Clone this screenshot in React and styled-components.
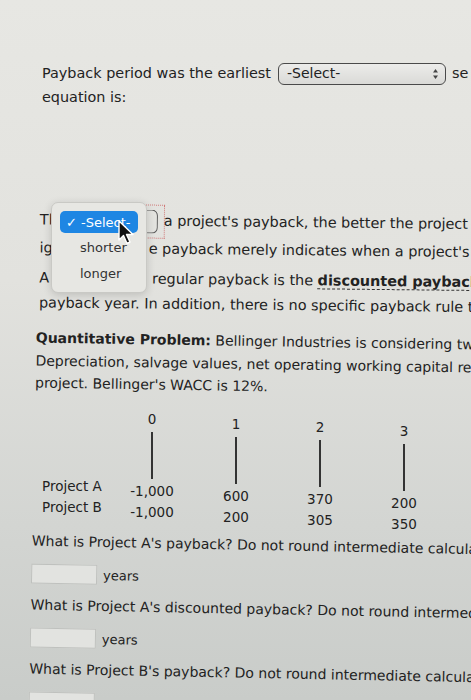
import React from "react";
import styled, { createGlobalStyle } from "styled-components";

const Global = createGlobalStyle`
  html, body {
    margin: 0;
    padding: 0;
    overflow: hidden;
  }
  body {
    width: 471px;
    height: 700px;
    background: linear-gradient(180deg, #e7e7e3 0%, #e2e2de 40%, #d3d5d2 75%, #c9ccc9 100%);
    font-family: "DejaVu Sans", Verdana, sans-serif;
    color: #222;
  }
`;

const Page = styled.div`
  width: 471px;
  height: 700px;
  overflow: hidden;
  position: relative;
  padding-top: 63px;
  box-sizing: border-box;
`;

const Section = styled.div`
  padding-left: ${(p) => p.$left || 36}px;
  margin-top: ${(p) => p.$top || 0}px;
  font-size: ${(p) => p.$size || 14}px;
  transform: rotate(${(p) => p.$tilt || 0}deg);
  transform-origin: left top;
`;

const Line = styled.div`
  white-space: nowrap;
  line-height: ${(p) => p.$lh || 21}px;
  height: ${(p) => p.$lh || 21}px;
  margin-top: ${(p) => p.$mt || 0}px;
  display: flex;
  align-items: center;
`;

const Bold = styled.b`
  font-weight: bold;
`;

const Dashed = styled.b`
  font-weight: bold;
  border-bottom: 1.5px dashed #333;
  line-height: 16px;
`;

const Gap = styled.span`
  display: inline-block;
  width: ${(p) => p.$w}px;
  flex-shrink: 0;
`;

const SelectBox = styled.span`
  display: inline-flex;
  align-items: center;
  justify-content: space-between;
  width: ${(p) => p.$w}px;
  height: 22px;
  box-sizing: border-box;
  margin: 0 6px 0 7px;
  padding: 0 6px 0 8px;
  border: 1.5px solid #4a4a4a;
  border-radius: 6px;
  background: linear-gradient(180deg, #ececea, #dadad7);
  font-size: 14px;
  color: #222;
  flex-shrink: 0;
`;

const Arrows = styled.svg`
  width: 7px;
  height: 12px;
`;

const DottedWrap = styled.span`
  display: inline-flex;
  align-items: center;
  justify-content: flex-end;
  width: 22px;
  height: 32px;
  margin-left: 84px;
  margin-right: 0;
  outline: 1.5px dotted #d07a7a;
  flex-shrink: 0;
`;

const Stub = styled.span`
  width: 10px;
  height: 22px;
  border: 1.5px solid #555;
  border-left: none;
  border-radius: 0 6px 6px 0;
  margin-right: 6px;
`;

const Popup = styled.div`
  position: absolute;
  left: 51px;
  top: 202px;
  width: 96px;
  height: 91px;
  box-sizing: border-box;
  padding: 8px 8px;
  background: #e7e7e3;
  border: 1px solid #c9c9c5;
  border-radius: 7px;
  box-shadow: 0 2px 8px rgba(0, 0, 0, 0.16);
  font-size: 13px;
  z-index: 2;
`;

const Option = styled.div`
  height: ${(p) => (p.$active ? 22 : 24)}px;
  display: flex;
  align-items: center;
  padding-left: ${(p) => (p.$active ? 6 : 20)}px;
  border-radius: 5px;
  background: ${(p) => (p.$active ? "#1e86e3" : "transparent")};
  color: ${(p) => (p.$active ? "#fff" : "#333")};
  margin-bottom: 2px;
`;

const Cursor = styled.svg`
  position: absolute;
  left: 117px;
  top: 220px;
  width: 20px;
  height: 26px;
  z-index: 3;
`;

const Timeline = styled.div`
  display: flex;
  padding-left: 42px;
  margin-top: 18px;
  font-size: 13.5px;
`;

const Labels = styled.div`
  width: 68px;
  padding-top: 65px;
  display: flex;
  flex-direction: column;
`;

const Col = styled.div`
  width: 84px;
  display: flex;
  flex-direction: column;
  align-items: center;
  transform: translateY(${(p) => p.$drop}px);
`;

const TickNum = styled.div`
  height: 16px;
  line-height: 16px;
`;

const TickLine = styled.div`
  width: 1.5px;
  height: 47px;
  background: #333;
  margin: 5px 0 2px;
`;

const Cell = styled.div`
  height: 21px;
  line-height: 21px;
  white-space: nowrap;
`;

const AnswerRow = styled.div`
  display: flex;
  align-items: center;
  gap: 6px;
  height: 26px;
  font-size: 13px;
  margin: 9px 0 8px;
`;

const Input = styled.span`
  display: inline-block;
  width: 66px;
  height: 20px;
  box-sizing: border-box;
  border: 1px solid #bfc1be;
  background: #e2e3e0;
`;

const UpDown = () => (
  <Arrows viewBox="0 0 7 12">
    <path d="M3.5 1 L6 4.5 H1 Z" fill="#444" />
    <path d="M3.5 11 L6 7.5 H1 Z" fill="#444" />
  </Arrows>
);

const cols = [
  { n: "0", a: "-1,000", b: "-1,000", drop: 0 },
  { n: "1", a: "600", b: "200", drop: 5 },
  { n: "2", a: "370", b: "305", drop: 8 },
  { n: "3", a: "200", b: "350", drop: 12 },
];

export default function App() {
  return (
    <>
      <Global />
      <Page>
        <Section $left={42} $size={14.4}>
          <Line>
            Payback period was the earliest
            <SelectBox $w={168}>
              -Select-
              <UpDown />
            </SelectBox>
            se
          </Line>
          <Line $mt={3}>equation is:</Line>
        </Section>

        <Section $left={40} $top={101} $tilt={0.6} $size={14.4}>
          <Line>
            Th
            <DottedWrap>
              <Stub />
            </DottedWrap>
            a project's payback, the better the project
          </Line>
          <Line $mt={7}>
            ig
            <Gap $w={96} />
            e payback merely indicates when a project's
          </Line>
          <Line $mt={9}>
            A
            <Gap $w={103} />
            regular payback is the&nbsp;<Dashed>discounted payback</Dashed>
          </Line>
          <Line $mt={4}>payback year. In addition, there is no specific payback rule to</Line>
        </Section>

        <Section $left={36} $top={13} $tilt={0.9}>
          <Line $lh={23}>
            <Bold>Quantitative Problem:</Bold>&nbsp;Bellinger Industries is considering two
          </Line>
          <Line $lh={23}>Depreciation, salvage values, net operating working capital re</Line>
          <Line $lh={21}>project. Bellinger's WACC is 12%.</Line>
        </Section>

        <Timeline>
          <Labels>
            <Cell>Project A</Cell>
            <Cell>Project B</Cell>
          </Labels>
          {cols.map((c) => (
            <Col key={c.n} $drop={c.drop}>
              <TickNum>{c.n}</TickNum>
              <TickLine />
              <Cell>{c.a}</Cell>
              <Cell>{c.b}</Cell>
            </Col>
          ))}
        </Timeline>

        <Section $left={32} $top={7} $tilt={1.1}>
          <Line>What is Project A's payback? Do not round intermediate calculations</Line>
          <AnswerRow>
            <Input />
            years
          </AnswerRow>
          <Line>What is Project A's discounted payback? Do not round intermediate</Line>
          <AnswerRow>
            <Input />
            years
          </AnswerRow>
          <Line>What is Project B's payback? Do not round intermediate calculations</Line>
          <AnswerRow>
            <Input />
            years
          </AnswerRow>
        </Section>

        <Popup>
          <Option $active>✓&nbsp;-Select-</Option>
          <Option>shorter</Option>
          <Option>longer</Option>
        </Popup>
        <Cursor viewBox="0 0 20 26">
          <path
            d="M2 1 L2 20 L6.5 15.5 L10 23.5 L13 22 L9.5 14.5 L16 14.5 Z"
            fill="#111"
            stroke="#fff"
            strokeWidth="1.4"
            strokeLinejoin="round"
          />
        </Cursor>
      </Page>
    </>
  );
}
